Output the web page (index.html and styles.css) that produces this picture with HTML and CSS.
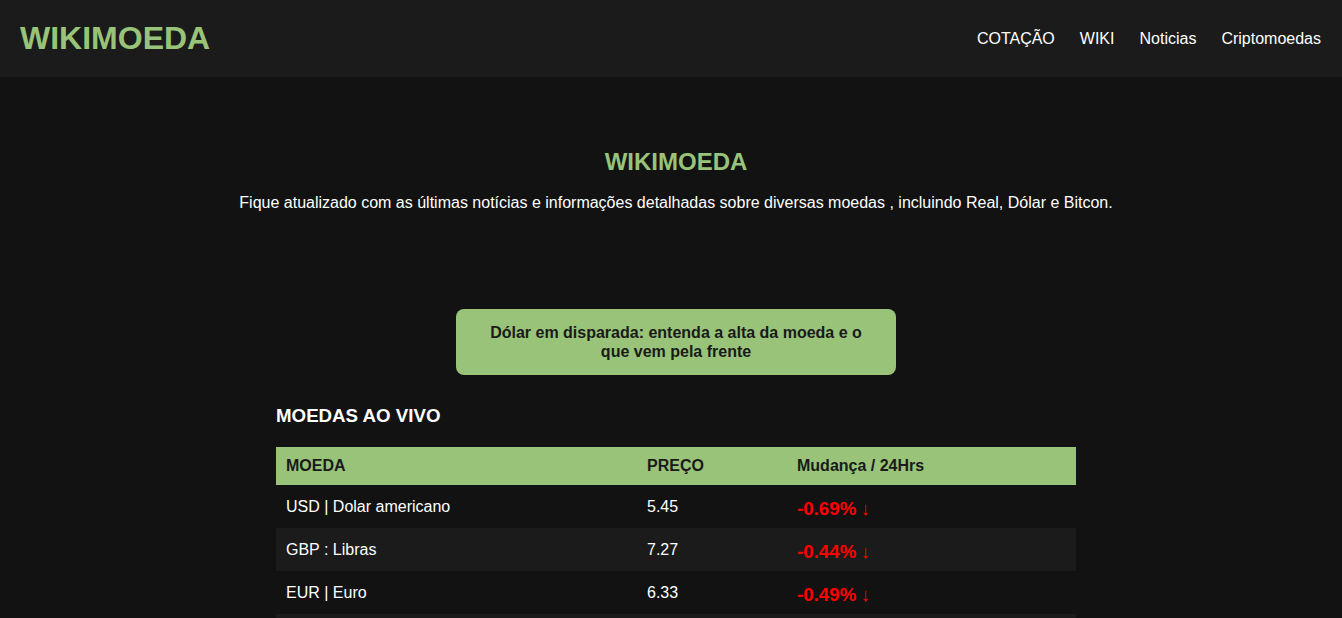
FILE: index.html
```html
<!DOCTYPE html>
<html lang="pt-BR">
<head>
<meta charset="utf-8">
<title>WIKIMOEDA</title>
<link rel="stylesheet" href="styles.css">
</head>
<body>
<header class="topbar">
  <div class="logo">WIKIMOEDA</div>
  <nav class="nav">
    <a href="#">COTAÇÃO</a>
    <a href="#">WIKI</a>
    <a href="#">Noticias</a>
    <a href="#">Criptomoedas</a>
  </nav>
</header>
<main class="main">
  <section class="hero">
    <h2 class="hero-title">WIKIMOEDA</h2>
    <p class="hero-text">Fique atualizado com as últimas notícias e informações detalhadas sobre diversas moedas , incluindo Real, Dólar e Bitcon.</p>
  </section>
  <div class="news-box">Dólar em disparada: entenda a alta da moeda e o que vem pela frente</div>
  <section class="live">
    <h3 class="live-title">MOEDAS AO VIVO</h3>
    <table class="rates">
      <thead>
        <tr><th class="c1">MOEDA</th><th class="c2">PREÇO</th><th class="c3">Mudança / 24Hrs</th></tr>
      </thead>
      <tbody>
        <tr><td>USD | Dolar americano</td><td>5.45</td><td><span class="down">-0.69%</span> <span class="arrow">↓</span></td></tr>
        <tr><td>GBP : Libras</td><td>7.27</td><td><span class="down">-0.44%</span> <span class="arrow">↓</span></td></tr>
        <tr><td>EUR | Euro</td><td>6.33</td><td><span class="down">-0.49%</span> <span class="arrow">↓</span></td></tr>
        <tr><td>BTC | Bitcoin</td><td>350000</td><td><span class="down">-1.20%</span> <span class="arrow">↓</span></td></tr>
      </tbody>
    </table>
  </section>
</main>
</body>
</html>
```
FILE: styles.css
```css
* { box-sizing: border-box; }
html, body { margin: 0; padding: 0; }
body {
  background: #121212;
  color: #ffffff;
  font-family: "Liberation Sans", Arial, sans-serif;
  font-size: 16px;
}
.topbar {
  background: #1b1b1b;
  height: 77px;
  display: flex;
  align-items: center;
  justify-content: space-between;
  padding: 0 21px 0 20px;
}
.logo {
  color: #98c379;
  font-size: 32px;
  font-weight: bold;
}
.nav {
  display: flex;
  gap: 25px;
}
.nav a {
  color: #ffffff;
  text-decoration: none;
  font-size: 16px;
}
.main {
  padding-left: 10px;
}
.hero {
  text-align: center;
  padding-top: 71px;
}
.hero-title {
  margin: 0;
  color: #98c379;
  font-size: 24px;
  font-weight: bold;
}
.hero-text {
  margin: 18px 0 0;
  font-size: 16px;
}
.news-box {
  width: 440px;
  margin: 97px auto 0;
  background: #98c379;
  color: #1a1a1a;
  border-radius: 8px;
  padding: 14px 20px;
  text-align: center;
  font-weight: bold;
  font-size: 16px;
  line-height: 19px;
}
.live {
  width: 800px;
  margin: 30px auto 0;
}
.live-title {
  margin: 0 0 20px;
  font-size: 18.72px;
  font-weight: bold;
}
.rates {
  width: 800px;
  border-collapse: collapse;
  table-layout: fixed;
}
.rates th {
  background: #98c379;
  color: #1a1a1a;
  text-align: left;
  font-weight: bold;
  height: 38px;
  padding: 0 10px;
}
.rates .c1 { width: 361px; }
.rates .c2 { width: 150px; }
.rates td {
  height: 43px;
  padding: 0 10px;
  vertical-align: middle;
}
.rates tbody tr:nth-child(even) td { background: #1b1b1b; }
.down {
  color: #ff0000;
  font-weight: bold;
  font-size: 18.72px;
  position: relative;
  top: 2px;
}
.arrow {
  color: #ff0000;
  font-size: 18.72px;
  position: relative;
  top: 2px;
}
```
